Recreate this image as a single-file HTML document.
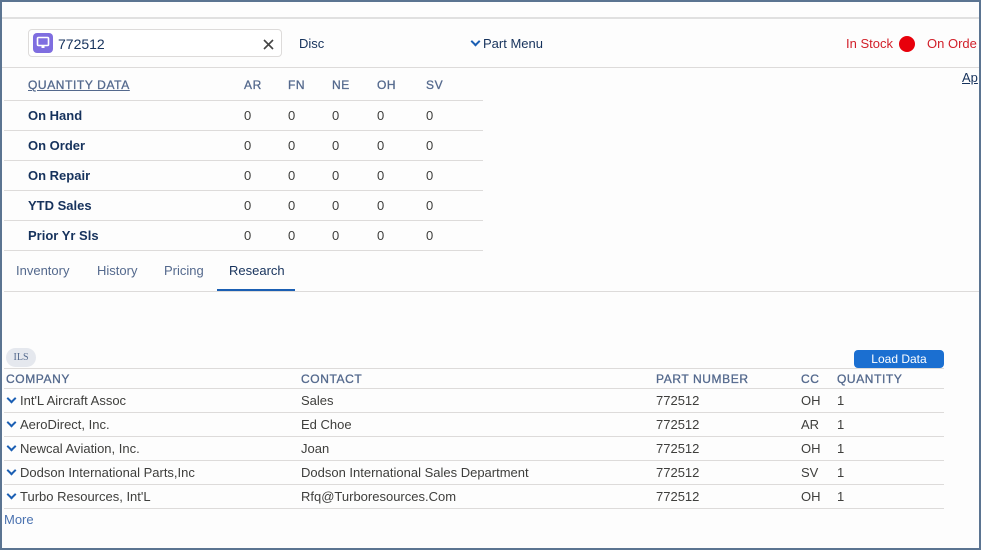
<!DOCTYPE html>
<html><head><meta charset="utf-8"><style>
*{box-sizing:border-box;margin:0;padding:0}
body{width:984px;height:551px;background:#fff;font-family:"Liberation Sans",sans-serif;font-size:13px;color:#16325c;position:relative;overflow:hidden}
.frame{position:absolute;left:0;top:0;width:981px;height:550px;border:2px solid #5b7491;background:#fdfdfd}
.a{position:absolute;white-space:nowrap}
.hl{position:absolute;height:1px;background:#dddbda}
.g{color:#54698d}
.h{color:#54698d;font-size:12px;letter-spacing:.6px;font-weight:normal;-webkit-text-stroke:.3px #54698d}
.b{font-weight:bold;color:#16325c}
.chev{display:inline-block;width:7px;height:7px;border-right:2px solid #1b5fb3;border-bottom:2px solid #1b5fb3;transform:rotate(45deg);margin:0 5px 3px 5px}
</style></head><body>
<div class="frame"></div>
<div class="hl" style="left:2px;top:17px;width:977px;height:2px;background:#e0e0e0"></div>
<div class="a" style="left:28px;top:29px;width:254px;height:28px;border:1px solid #dddbda;border-radius:4px;background:#fff"></div>
<div class="a" style="left:33px;top:33px;width:20px;height:20px;border-radius:4px;background:#7f6ee0"></div>
<svg class="a" style="left:36px;top:36px" width="14" height="14" viewBox="0 0 14 14"><rect x="1.5" y="1.5" width="11" height="8" rx="1" fill="none" stroke="#fff" stroke-width="1.6"/><rect x="5.5" y="10" width="3" height="2" fill="#fff"/></svg>
<div class="a" style="left:58px;top:36px;font-size:14px;color:#16325c">772512</div>
<svg class="a" style="left:263px;top:39px" width="11" height="11" viewBox="0 0 11 11"><path d="M1 1L10 10M10 1L1 10" stroke="#444" stroke-width="1.6"/></svg>
<div class="a" style="left:299px;top:36px">Disc</div>
<div class="a" style="left:467px;top:36px"><span class="chev" style="margin:0 4px 3px 5px"></span>Part Menu</div>
<div class="a" style="left:846px;top:36px;color:#d2202a">In Stock</div>
<div class="a" style="left:899px;top:36px;width:16px;height:16px;border-radius:50%;background:#e8000b"></div>
<div class="a" style="left:927px;top:36px;color:#d2202a">On Orde</div>
<div class="hl" style="left:2px;top:67px;width:977px"></div>
<div class="a" style="left:962px;top:70px;text-decoration:underline;color:#16325c">Ap</div>

<div class="a h" style="left:28px;top:78px;text-decoration:underline">QUANTITY DATA</div>
<div class="a h" style="left:244px;top:78px">AR</div>
<div class="a h" style="left:288px;top:78px">FN</div>
<div class="a h" style="left:332px;top:78px">NE</div>
<div class="a h" style="left:377px;top:78px">OH</div>
<div class="a h" style="left:426px;top:78px">SV</div>
<div class="hl" style="left:4px;top:100px;width:479px"></div>
<div class="a b" style="left:28px;top:108px">On Hand</div>
<div class="hl" style="left:4px;top:130px;width:479px"></div>
<div class="a b" style="left:28px;top:138px">On Order</div>
<div class="hl" style="left:4px;top:160px;width:479px"></div>
<div class="a b" style="left:28px;top:168px">On Repair</div>
<div class="hl" style="left:4px;top:190px;width:479px"></div>
<div class="a b" style="left:28px;top:198px">YTD Sales</div>
<div class="hl" style="left:4px;top:220px;width:479px"></div>
<div class="a b" style="left:28px;top:228px">Prior Yr Sls</div>
<div class="hl" style="left:4px;top:250px;width:479px"></div>
<div class="a z" style="left:244px">0<br>0<br>0<br>0<br>0</div>
<div class="a z" style="left:288px">0<br>0<br>0<br>0<br>0</div>
<div class="a z" style="left:332px">0<br>0<br>0<br>0<br>0</div>
<div class="a z" style="left:377px">0<br>0<br>0<br>0<br>0</div>
<div class="a z" style="left:426px">0<br>0<br>0<br>0<br>0</div>
<style>.z{top:101px;line-height:30px;color:#3e3e3c}</style>

<div class="a g" style="left:16px;top:263px">Inventory</div>
<div class="a g" style="left:97px;top:263px">History</div>
<div class="a g" style="left:164px;top:263px">Pricing</div>
<div class="a" style="left:229px;top:263px">Research</div>
<div class="hl" style="left:4px;top:291px;width:975px"></div>
<div class="a" style="left:217px;top:289px;width:78px;height:2px;background:#1b5fb3"></div>

<div class="a" style="left:6px;top:348px;width:30px;height:19px;border-radius:10px;background:#e5e8ee;font-size:10px;color:#54698d;text-align:center;line-height:19px;font-family:'Liberation Serif',serif">ILS</div>
<div class="a" style="left:854px;top:350px;width:90px;height:18px;border-radius:4px;background:#1b6fd1;color:#fff;font-size:12px;text-align:center;line-height:18px">Load Data</div>
<div class="hl" style="left:4px;top:368px;width:940px"></div>
<div class="a h" style="left:6px;top:372px">COMPANY</div>
<div class="a h" style="left:301px;top:372px">CONTACT</div>
<div class="a h" style="left:656px;top:372px">PART NUMBER</div>
<div class="a h" style="left:801px;top:372px">CC</div>
<div class="a h" style="left:837px;top:372px">QUANTITY</div>
<div class="hl" style="left:4px;top:388px;width:940px"></div>
<div class="hl" style="left:4px;top:412px;width:940px"></div>
<div class="hl" style="left:4px;top:436px;width:940px"></div>
<div class="hl" style="left:4px;top:460px;width:940px"></div>
<div class="hl" style="left:4px;top:484px;width:940px"></div>
<div class="hl" style="left:4px;top:508px;width:940px"></div>
<div class="a r" style="left:3px"><span class="chev"></span>Int'L Aircraft Assoc<br><span class="chev"></span>AeroDirect, Inc.<br><span class="chev"></span>Newcal Aviation, Inc.<br><span class="chev"></span>Dodson International Parts,Inc<br><span class="chev"></span>Turbo Resources, Int'L</div>
<div class="a r" style="left:301px">Sales<br>Ed Choe<br>Joan<br>Dodson International Sales Department<br>Rfq@Turboresources.Com</div>
<div class="a r" style="left:656px">772512<br>772512<br>772512<br>772512<br>772512</div>
<div class="a r" style="left:801px">OH<br>AR<br>OH<br>SV<br>OH</div>
<div class="a r" style="left:837px">1<br>1<br>1<br>1<br>1</div>
<style>.r{top:389px;line-height:24px;color:#3e3e3c}</style>
<div class="a" style="left:4px;top:512px;color:#4a72b0">More</div>
</body></html>
